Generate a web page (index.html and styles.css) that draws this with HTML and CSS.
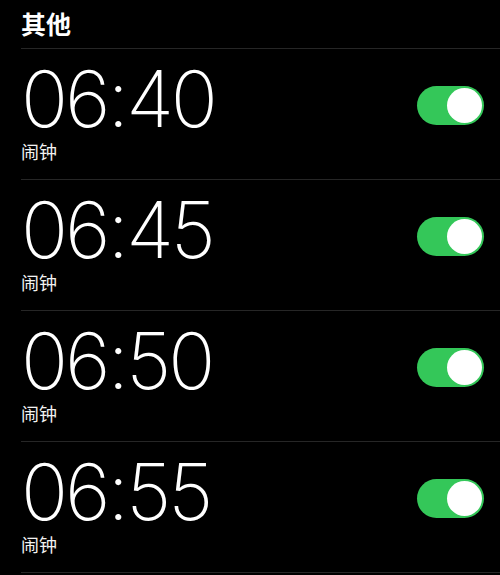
FILE: index.html
```html
<!DOCTYPE html>
<html lang="zh">
<head>
<meta charset="utf-8">
<link rel="stylesheet" href="styles.css">
</head>
<body>
<div class="page">
  <h1 class="title">其他</h1>
  <div class="row">
    <div class="info"><div class="time">06:40</div><div class="label">闹钟</div></div>
    <div class="switch"><div class="knob"></div></div>
  </div>
  <div class="row">
    <div class="info"><div class="time">06:45</div><div class="label">闹钟</div></div>
    <div class="switch"><div class="knob"></div></div>
  </div>
  <div class="row">
    <div class="info"><div class="time">06:50</div><div class="label">闹钟</div></div>
    <div class="switch"><div class="knob"></div></div>
  </div>
  <div class="row">
    <div class="info"><div class="time">06:55</div><div class="label">闹钟</div></div>
    <div class="switch"><div class="knob"></div></div>
  </div>
</div>
</body>
</html>
```
FILE: styles.css
```css
html, body {
  margin: 0;
  padding: 0;
  background: #000;
}
.page {
  width: 500px;
  height: 575px;
  overflow: hidden;
  padding-left: 21px;
  box-sizing: border-box;
  font-family: "Noto Sans CJK SC", "Noto Sans", sans-serif;
  color: #fff;
}
.title {
  margin: 0;
  height: 49px;
  box-sizing: border-box;
  padding-top: 6px;
  font-size: 25px;
  font-weight: 700;
  line-height: 34px;
  border-bottom: 1px solid #262626;
}
.row {
  height: 131px;
  box-sizing: border-box;
  border-bottom: 1px solid #262626;
  display: flex;
  align-items: flex-start;
  justify-content: space-between;
  padding-right: 16px;
}
.info {
  display: flex;
  flex-direction: column;
  padding-top: 20px;
}
.time {
  font-family: Inter, "Noto Sans", sans-serif;
  font-weight: 200;
  font-size: 78px;
  line-height: 60px;
  letter-spacing: -3px;
}
.label {
  font-size: 18px;
  line-height: 24px;
  margin-top: 10px;
  color: #f2f2f2;
}
.switch {
  width: 67px;
  height: 39px;
  border-radius: 20px;
  background: #34c759;
  display: flex;
  align-items: center;
  justify-content: flex-end;
  padding: 2px;
  box-sizing: border-box;
  margin-top: 37px;
}
.knob {
  width: 35px;
  height: 35px;
  border-radius: 50%;
  background: #fff;
}
```
